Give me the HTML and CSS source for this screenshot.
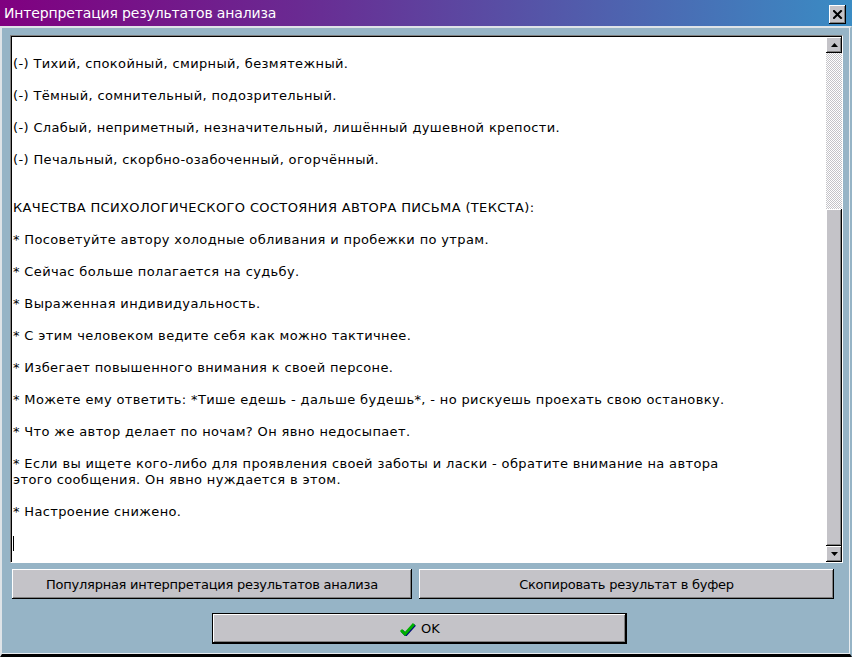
FILE: index.html
```html
<!DOCTYPE html>
<html lang="ru">
<head>
<meta charset="utf-8">
<title>Интерпретация результатов анализа</title>
<link rel="stylesheet" href="styles.css">
</head>
<body>
<div class="window">
  <div class="titlebar">
    <span class="title">Интерпретация результатов анализа</span>
    <div class="close">
      <svg width="10" height="9" viewBox="0 0 10 9"><path d="M1 1 L8 8 M8 1 L1 8" stroke="#000" stroke-width="2" fill="none" stroke-linecap="square"/></svg>
    </div>
  </div>
  <div class="client">
    <div class="memo">
      <div class="memo-text">
        <p>(-) Тихий, спокойный, смирный, безмятежный.</p>
        <p>(-) Тёмный, сомнительный, подозрительный.</p>
        <p>(-) Слабый, неприметный, незначительный, лишённый душевной крепости.</p>
        <p class="gap2">(-) Печальный, скорбно-озабоченный, огорчённый.</p>
        <p>КАЧЕСТВА ПСИХОЛОГИЧЕСКОГО СОСТОЯНИЯ АВТОРА ПИСЬМА (ТЕКСТА):</p>
        <p>* Посоветуйте автору холодные обливания и пробежки по утрам.</p>
        <p>* Сейчас больше полагается на судьбу.</p>
        <p>* Выраженная индивидуальность.</p>
        <p>* С этим человеком ведите себя как можно тактичнее.</p>
        <p>* Избегает повышенного внимания к своей персоне.</p>
        <p>* Можете ему ответить: *Тише едешь - дальше будешь*, - но рискуешь проехать свою остановку.</p>
        <p>* Что же автор делает по ночам? Он явно недосыпает.</p>
        <p>* Если вы ищете кого-либо для проявления своей заботы и ласки - обратите внимание на автора<br>этого сообщения. Он явно нуждается в этом.</p>
        <p>* Настроение снижено.</p>
        <p class="caret-line"><span class="caret"></span></p>
      </div>
      <div class="scrollbar">
        <div class="sb-btn">
          <svg width="7" height="4" viewBox="0 0 7 4"><path d="M3.5 0 L7 4 L0 4 Z" fill="#000"/></svg>
        </div>
        <div class="sb-track"></div>
        <div class="sb-thumb"></div>
        <div class="sb-btn">
          <svg width="7" height="4" viewBox="0 0 7 4"><path d="M0 0 L7 0 L3.5 4 Z" fill="#000"/></svg>
        </div>
      </div>
    </div>
    <div class="btn-row">
      <div class="btn btn-left">Популярная интерпретация результатов анализа</div>
      <div class="btn btn-right">Скопировать результат в буфер</div>
    </div>
    <div class="ok-row">
      <div class="btn ok">
        <svg class="check" width="17" height="15" viewBox="0 0 17 15">
          <path d="M2 9 L6 13 L15 3" stroke="#000080" stroke-width="3" fill="none" transform="translate(0.8,0.8)"/>
          <path d="M2 9 L6 13 L15 3" stroke="#00b000" stroke-width="3" fill="none"/>
        </svg>
        <span class="ok-label">OK</span>
      </div>
    </div>
  </div>
</div>
</body>
</html>
```

FILE: styles.css
```css
html, body {
  margin: 0;
  padding: 0;
  background: #96b4c6;
}
.window {
  width: 852px;
  height: 657px;
  display: flex;
  flex-direction: column;
  background: #96b4c6;
  font-family: "DejaVu Sans", "Liberation Sans", sans-serif;
  overflow: hidden;
}
.titlebar {
  height: 26px;
  flex: none;
  display: flex;
  align-items: center;
  justify-content: space-between;
  background: linear-gradient(to right, #800080 0%, #6a2a92 35%, #3a8cc4 100%);
  padding: 0 6px 0 4px;
}
.title {
  color: #fff;
  font-size: 14px;
  letter-spacing: -0.15px;
}
.close {
  width: 17px;
  height: 19px;
  margin-top: 2px;
  background: #c4c3c8;
  box-shadow: inset -1px -1px #000, inset 1px 1px #fff, inset -2px -2px #808080;
  display: flex;
  align-items: center;
  justify-content: center;
}
.client {
  flex: 1;
  border-top: 2px solid #dfe4e8;
  border-left: 2px solid #dfe4e8;
  border-right: 2px solid #96b4c6;
  box-shadow: inset -1px -1px #e8ecef;
  border-bottom: 3px solid #000;
  padding: 7px 4px 0 8px;
  display: flex;
  flex-direction: column;
}
.memo {
  width: 833px;
  height: 528px;
  flex: none;
  box-sizing: border-box;
  border-top: 1px solid #808080;
  border-left: 1px solid #808080;
  border-right: 1px solid #fff;
  border-bottom: 1px solid #fff;
  display: flex;
}
.memo-text {
  flex: 1;
  background: #fff;
  border-top: 1px solid #000;
  border-left: 1px solid #000;
  padding: 19px 0 0 1px;
  font-size: 13px;
  letter-spacing: 0.36px;
  line-height: 16px;
  color: #000;
  overflow: hidden;
}
.memo-text p {
  margin: 0 0 16px 0;
  white-space: nowrap;
}
.memo-text p.gap2 {
  margin-bottom: 32px;
}
.caret-line {
  height: 16px;
}
.caret {
  display: inline-block;
  width: 1px;
  height: 15px;
  background: #000;
  vertical-align: top;
}
.scrollbar {
  width: 16px;
  flex: none;
  display: flex;
  flex-direction: column;
  background: #fff;
  border-top: 1px solid #000;
}
.sb-btn {
  height: 16px;
  flex: none;
  background: #c4c3c8;
  box-sizing: border-box;
  box-shadow: inset -1px -1px #000, inset 1px 1px #fff, inset -2px -2px #808080;
  display: flex;
  align-items: center;
  justify-content: center;
}
.sb-track {
  height: 156px;
  flex: none;
  background: repeating-conic-gradient(#c4c3c8 0 25%, #fff 0 50%) 0 0 / 2px 2px;
}
.sb-thumb {
  flex: 1;
  background: #c4c3c8;
  box-shadow: inset -1px -1px #000, inset 1px 1px #fff, inset -2px -2px #808080;
}
.btn-row {
  display: flex;
  gap: 7px;
  margin-top: 6px;
  margin-left: 2px;
}
.btn {
  height: 30px;
  box-sizing: border-box;
  background: #c4c3c8;
  box-shadow: inset -1px -1px #000, inset 1px 1px #fff, inset -2px -2px #808080;
  display: flex;
  align-items: center;
  justify-content: center;
  font-size: 13px;
  letter-spacing: -0.25px;
  color: #000;
}
.btn-left { width: 400px; }
.btn-right { width: 415px; }
.ok-row {
  display: flex;
  margin-top: 14px;
  padding-left: 202px;
}
.ok {
  width: 415px;
  height: 31px;
  border: 1px solid #000;
  gap: 5px;
}
.ok-label {
  letter-spacing: 0;
}
.check {
  display: block;
}
```
